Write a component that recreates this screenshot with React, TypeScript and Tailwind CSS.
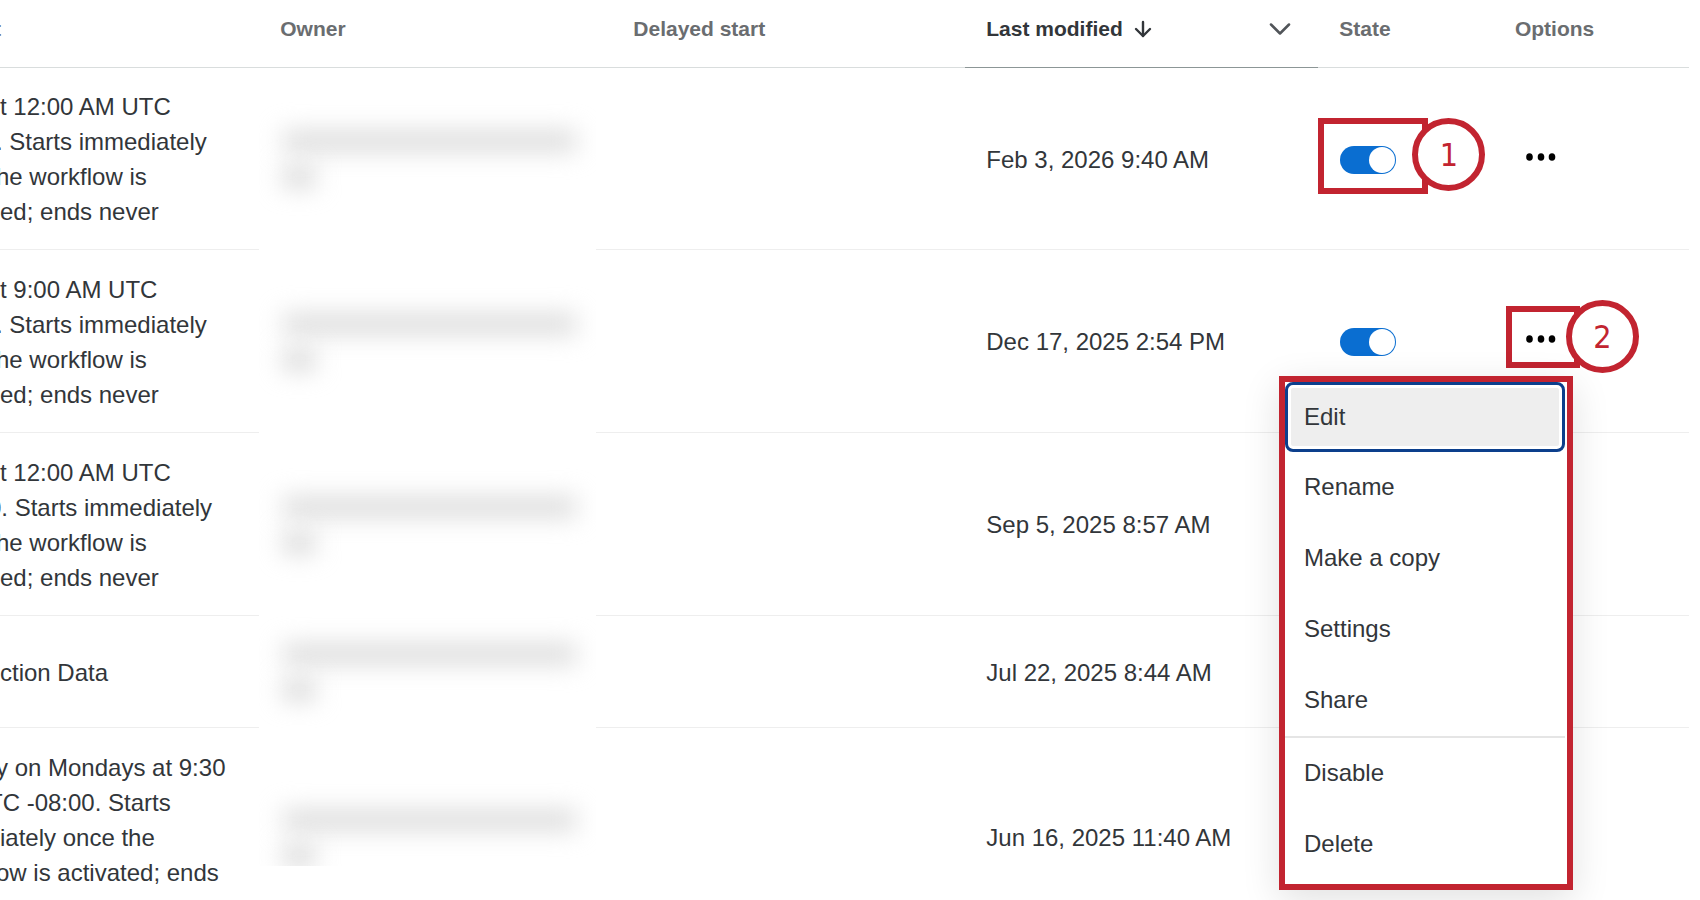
import { ArrowDown, ChevronDown } from "lucide-react"

// shift pulls a line under the left edge of the scrolled table
type Line = { text: string; shift?: string }

const workflows: { height: string; lines: Line[]; modified: string; hint?: number }[] = [
    {
        height: "h-[182px]",
        lines: [
            { text: "t 12:00 AM UTC" },
            { text: ". Starts immediately", shift: "-ml-1" },
            { text: "he workflow is", shift: "-ml-1" },
            { text: "ed; ends never" },
        ],
        modified: "Feb 3, 2026 9:40 AM",
        hint: 1,
    },
    {
        height: "h-[183px]",
        lines: [
            { text: "t 9:00 AM UTC" },
            { text: ". Starts immediately", shift: "-ml-1" },
            { text: "he workflow is", shift: "-ml-1" },
            { text: "ed; ends never" },
        ],
        modified: "Dec 17, 2025 2:54 PM",
        hint: 2,
    },
    {
        height: "h-[183px]",
        lines: [
            { text: "t 12:00 AM UTC" },
            { text: "0. Starts immediately", shift: "-ml-3" },
            { text: "he workflow is", shift: "-ml-1" },
            { text: "ed; ends never" },
        ],
        modified: "Sep 5, 2025 8:57 AM",
    },
    {
        height: "h-[112px]",
        lines: [{ text: "ction Data" }],
        modified: "Jul 22, 2025 8:44 AM",
    },
    {
        height: "h-[218px]",
        lines: [
            { text: "y on Mondays at 9:30", shift: "-ml-1" },
            { text: "TC -08:00. Starts", shift: "-ml-3" },
            { text: "iately once the" },
            { text: "ow is activated; ends", shift: "-ml-1" },
            { text: "never" },
        ],
        modified: "Jun 16, 2025 11:40 AM",
    },
]

const menuGroups = [
    ["Edit", "Rename", "Make a copy", "Settings", "Share"],
    ["Disable", "Delete"],
]

function Step({ n }: { n: number }) {
    return (
        <span className="flex size-[73px] items-center justify-center rounded-full border-6 border-[#c22430] bg-white font-['DejaVu_Sans_Condensed','DejaVu_Sans',sans-serif] text-[32px] leading-none text-[#c22430]">
            {n}
        </span>
    )
}

function Toggle({ label }: { label: string }) {
    return (
        <label className="relative block h-7 w-14">
            <input type="checkbox" defaultChecked aria-label={label} className="absolute inset-0 size-full appearance-none rounded-full bg-[#0a6ed1]" />
            <span className="pointer-events-none absolute inset-y-px right-px w-[26px] rounded-full bg-white" />
        </label>
    )
}

function MoreButton() {
    return (
        <button type="button" aria-label="More options" className="relative z-10 block">
            <svg width="30" height="8" viewBox="0 0 30 8" fill="black">
                <ellipse cx="3.5" cy="4" rx="3.3" ry="3.8" />
                <ellipse cx="15" cy="4" rx="3.3" ry="3.8" />
                <ellipse cx="26" cy="4" rx="3.3" ry="3.8" />
            </svg>
        </button>
    )
}

function OwnerSmear({ last }: { last: boolean }) {
    return (
        <div aria-hidden="true" className={`absolute top-0 right-4 left-0 overflow-hidden bg-white ${last ? "h-[138px]" : "-bottom-px"}`}>
            <div className={`flex h-full flex-col gap-4 pl-6 ${last ? "pt-[82px]" : "justify-center"}`}>
                <div className="mr-5 h-5 bg-[#dadada] blur-[12px]" />
                <div className="h-5 w-8 bg-[#d6d6d6] blur-[12px]" />
            </div>
        </div>
    )
}

function OptionsMenu() {
    return (
        <div role="menu" className="absolute top-[126px] right-[116px] z-30 w-[294px] border-6 border-[#c22430] bg-white pr-0.5 pb-1 shadow-[0_10px_36px_rgba(0,0,0,0.12)]">
            {menuGroups.map((group, i) => (
                <div key={i} className={i > 0 ? "border-t-2 border-[#e5e5e5]" : ""}>
                    {group.map((item) =>
                        item === "Edit" ? (
                            <button key={item} role="menuitem" type="button" className="block h-[70px] w-full rounded-lg border-3 border-[#0c3f8c] bg-[#eeeeee] pb-0.5 pl-4 text-left inset-ring-3 inset-ring-white">
                                {item}
                            </button>
                        ) : (
                            <button key={item} role="menuitem" type="button" className="block h-[71px] w-full pb-[3px] pl-[19px] text-left">
                                {item}
                            </button>
                        )
                    )}
                </div>
            ))}
        </div>
    )
}

export default function App() {
    return (
        <main className="h-screen overflow-hidden bg-white pr-[11px] font-['Liberation_Sans',Arial,sans-serif] text-2xl leading-[35px] text-[#32363a]">
            <table className="w-full table-fixed border-separate border-spacing-0 text-left">
                <colgroup>
                    <col />
                    <col className="w-[20.9%]" />
                    <col className="w-[20.9%]" />
                    <col className="w-[20.9%]" />
                    <col className="w-[10.4%]" />
                    <col className="w-[11.55%]" />
                </colgroup>
                <thead className="text-[21px] text-[#6a6d70]">
                    <tr className="h-[68px] *:border-b *:border-[#d9dddd] *:pb-2.5 *:font-bold">
                        <th>
                            <span className="-ml-1.5 block">t</span>
                        </th>
                        <th className="pl-[21px]">Owner</th>
                        <th className="pl-[21px]">Delayed start</th>
                        <th className="border-[#8c9696]! pr-5 pl-[21px] text-[#32363a]">
                            <div className="flex items-center">
                                Last modified
                                <ArrowDown className="ml-2 size-6" strokeWidth={2.4} />
                                <button type="button" aria-label="Column menu" className="ml-auto">
                                    <ChevronDown className="size-9 text-[#515559]" strokeWidth={1.7} />
                                </button>
                            </div>
                        </th>
                        <th className="pl-[21px]">State</th>
                        <th className="pl-[21px]">Options</th>
                    </tr>
                </thead>
                <tbody>
                    {workflows.map((row, i) => (
                        <tr key={i} className={`${row.height} *:border-b *:border-[#eeeeee]`}>
                            <td className="pt-px whitespace-nowrap">
                                {row.lines.map((line) => (
                                    <span key={line.text} className={`block ${line.shift ?? ""}`}>
                                        {line.text}
                                    </span>
                                ))}
                            </td>
                            <td className="relative">
                                <OwnerSmear last={i === workflows.length - 1} />
                            </td>
                            <td />
                            <td className="pt-px pl-[21px] whitespace-nowrap">{row.modified}</td>
                            <td className="relative pt-0.5 pl-[22px]">
                                {row.hint === 1 && (
                                    <div className="absolute top-[50px] left-0 h-[76px] w-[110px] border-6 border-[#c22430]">
                                        <div className="absolute -top-1.5 left-[88px] z-20">
                                            <Step n={1} />
                                        </div>
                                    </div>
                                )}
                                <Toggle label={`State of workflow ${i + 1}`} />
                            </td>
                            <td className="relative pb-1 pl-8">
                                {row.hint === 2 && (
                                    <>
                                        <div className="absolute top-[56px] left-3 h-[62px] w-[74px] border-6 border-[#c22430]">
                                            <div className="absolute -top-3 left-[54px] z-20">
                                                <Step n={2} />
                                            </div>
                                        </div>
                                        <OptionsMenu />
                                    </>
                                )}
                                <MoreButton />
                            </td>
                        </tr>
                    ))}
                </tbody>
            </table>
        </main>
    )
}
